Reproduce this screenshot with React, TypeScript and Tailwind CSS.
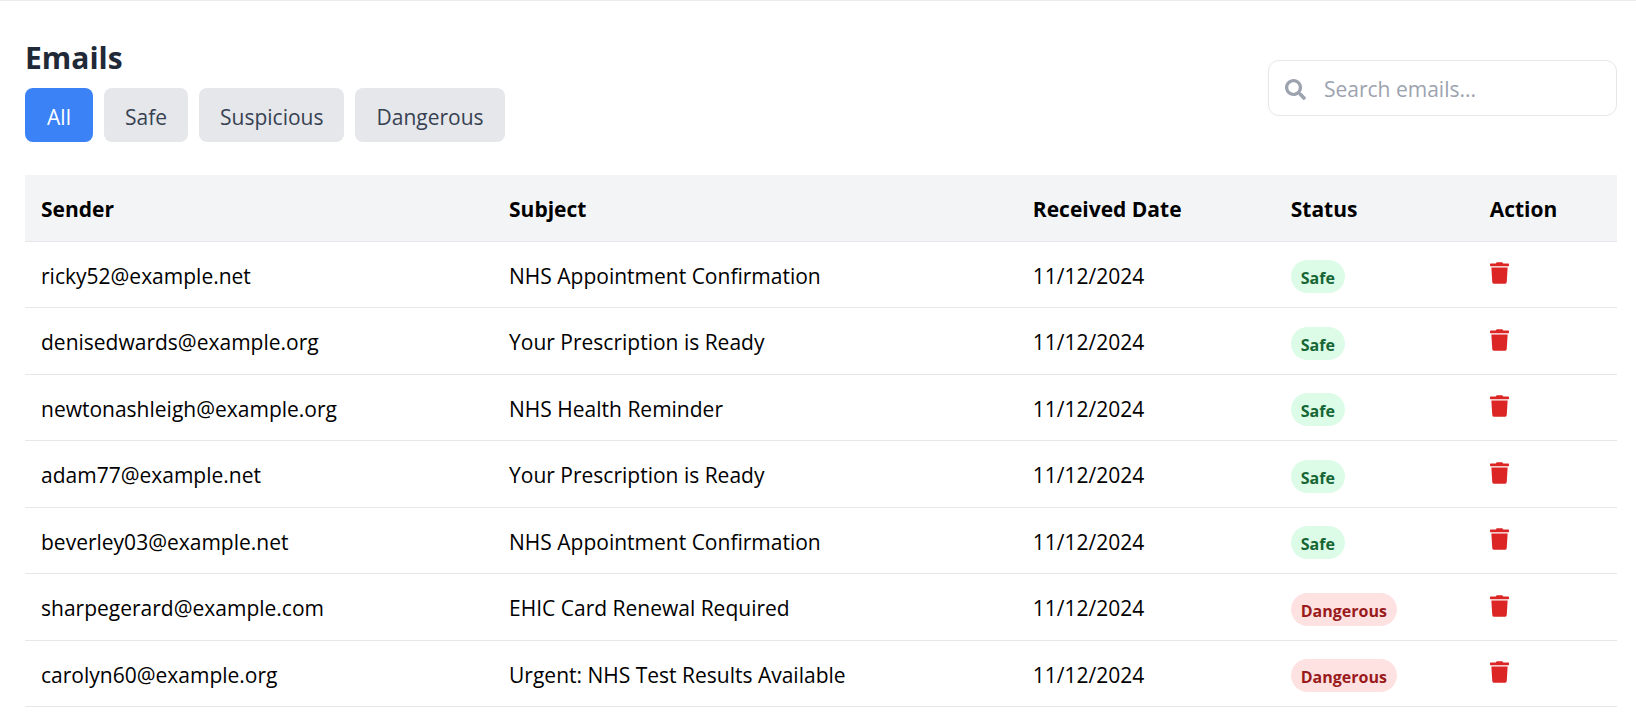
import { useState } from "react";
import { FaSearch, FaTrash } from "react-icons/fa";

type Status = "Safe" | "Suspicious" | "Dangerous";
type Filter = "All" | Status;

interface Email {
  id: number;
  sender: string;
  subject: string;
  date: string;
  status: Status;
}

const initialEmails: Email[] = [
  { id: 1, sender: "ricky52@example.net", subject: "NHS Appointment Confirmation", date: "11/12/2024", status: "Safe" },
  { id: 2, sender: "denisedwards@example.org", subject: "Your Prescription is Ready", date: "11/12/2024", status: "Safe" },
  { id: 3, sender: "newtonashleigh@example.org", subject: "NHS Health Reminder", date: "11/12/2024", status: "Safe" },
  { id: 4, sender: "adam77@example.net", subject: "Your Prescription is Ready", date: "11/12/2024", status: "Safe" },
  { id: 5, sender: "beverley03@example.net", subject: "NHS Appointment Confirmation", date: "11/12/2024", status: "Safe" },
  { id: 6, sender: "sharpegerard@example.com", subject: "EHIC Card Renewal Required", date: "11/12/2024", status: "Dangerous" },
  { id: 7, sender: "carolyn60@example.org", subject: "Urgent: NHS Test Results Available", date: "11/12/2024", status: "Dangerous" },
];

const filters: Filter[] = ["All", "Safe", "Suspicious", "Dangerous"];

const badgeColors: Record<Status, string> = {
  Safe: "bg-[#dcfce7] text-[#166534]",
  Suspicious: "bg-[#fef9c3] text-[#854d0e]",
  Dangerous: "bg-[#fee2e2] text-[#991b1b]",
};

function StatusBadge({ status }: { status: Status }) {
  return (
    <span className={`inline-flex h-[33px] items-center rounded-full px-[10px] pt-[3px] align-middle text-[16px] font-bold ${badgeColors[status]}`}>
      {status}
    </span>
  );
}

export default function App() {
  const [emails, setEmails] = useState(initialEmails);
  const [filter, setFilter] = useState<Filter>("All");
  const [query, setQuery] = useState("");

  const term = query.toLowerCase();
  const visible = emails.filter(
    (email) =>
      (filter === "All" || email.status === filter) &&
      (email.sender.toLowerCase().includes(term) || email.subject.toLowerCase().includes(term)),
  );

  return (
    <main className="border-t border-[#ececee] bg-white pr-[19px] pl-[25px] font-['Open_Sans','Noto_Sans',sans-serif] text-[21px] text-black">
      <header className="flex items-center justify-between pt-8 pb-[33px]">
        <div>
          <h1 className="pt-1 pb-[10px] text-[30px] leading-[41px] font-bold text-[#1f2937]">Emails</h1>
          <div className="flex gap-[11px]">
            {filters.map((name) => (
              <button
                key={name}
                type="button"
                aria-pressed={filter === name}
                onClick={() => setFilter(name)}
                className={`h-[54px] min-w-[68px] rounded-lg px-[21px] pt-[5px] ${filter === name ? "bg-[#3b82f6] text-white" : "bg-[#e5e7eb] text-[#374151]"}`}
              >
                {name}
              </button>
            ))}
          </div>
        </div>
        <label className="flex h-14 w-[349px] items-center gap-[18px] rounded-[11px] border border-[#e5e7eb] px-4 pt-1">
          <FaSearch className="size-[21px] shrink-0 text-[#9ca3af]" />
          <input
            type="text"
            aria-label="Search emails"
            placeholder="Search emails..."
            value={query}
            onChange={(event) => setQuery(event.target.value)}
            className="w-full min-w-0 bg-transparent outline-none placeholder:text-[#9ca3af]"
          />
        </label>
      </header>

      <table className="w-full table-fixed border-collapse text-left">
        <colgroup>
          <col className="w-[29.4%]" />
          <col className="w-[32.9%]" />
          <col className="w-[16.2%]" />
          <col className="w-[12.5%]" />
          <col className="w-[9%]" />
        </colgroup>
        <thead>
          <tr className="h-[66px] border-b border-[#e5e7eb] bg-[#f3f4f6]">
            {["Sender", "Subject", "Received Date", "Status", "Action"].map((title) => (
              <th key={title} scope="col" className="px-4 pt-[3px] font-bold">
                {title}
              </th>
            ))}
          </tr>
        </thead>
        <tbody>
          {visible.map((email) => (
            <tr key={email.id} className="border-b border-[#e5e7eb] odd:h-[66px] even:h-[67px]">
              <td className="px-4 pt-[5px]">{email.sender}</td>
              <td className="px-4 pt-[5px]">{email.subject}</td>
              <td className="px-4 pt-[5px]">{email.date}</td>
              <td className="px-4 pt-[5px]">
                <StatusBadge status={email.status} />
              </td>
              <td className="px-4 pb-[2px]">
                <button
                  type="button"
                  aria-label={`Delete email from ${email.sender}`}
                  onClick={() => setEmails(emails.filter((item) => item.id !== email.id))}
                  className="block text-[#dc2626]"
                >
                  <FaTrash className="h-[22px] w-[19px]" />
                </button>
              </td>
            </tr>
          ))}
        </tbody>
      </table>
    </main>
  );
}
